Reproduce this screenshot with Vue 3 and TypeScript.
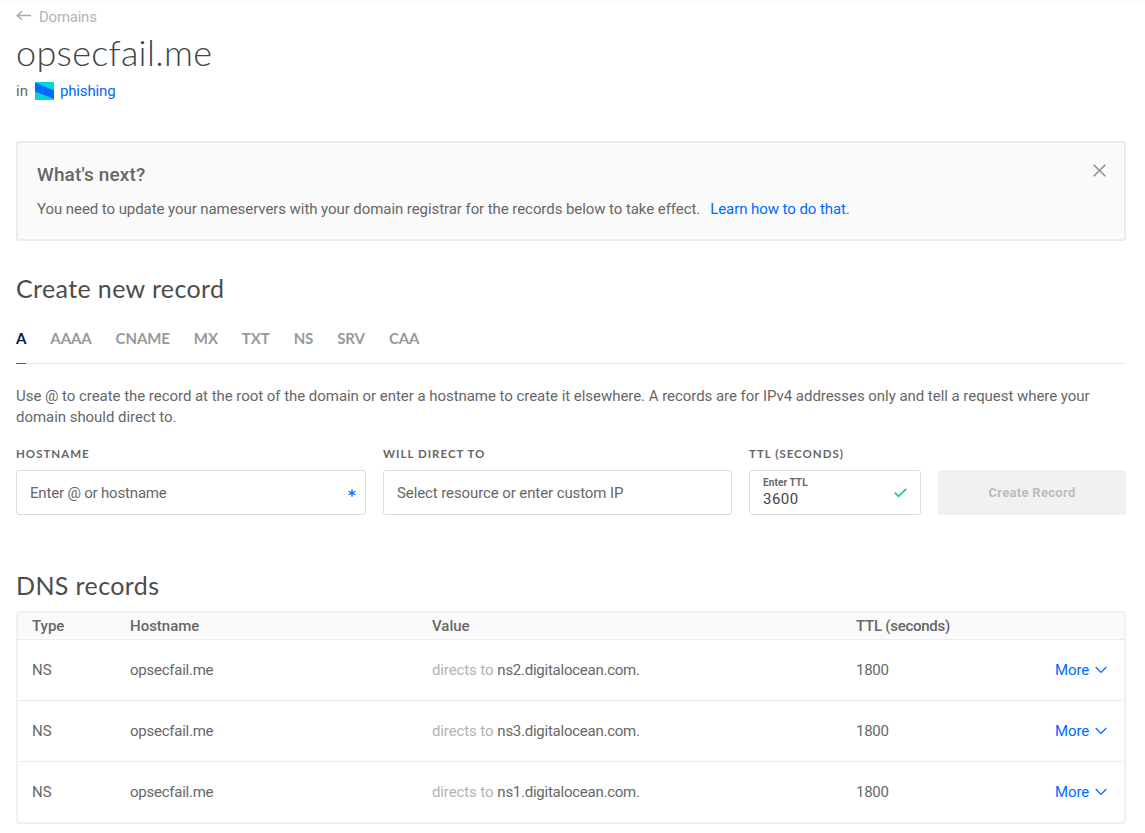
<script setup lang="ts">
interface DnsRecord {
  type: string
  hostname: string
  value: string
  ttl: number
}

const tabs: string[] = ['A', 'AAAA', 'CNAME', 'MX', 'TXT', 'NS', 'SRV', 'CAA']
const activeTab = 'A'

const records: DnsRecord[] = [
  { type: 'NS', hostname: 'opsecfail.me', value: 'ns2.digitalocean.com.', ttl: 1800 },
  { type: 'NS', hostname: 'opsecfail.me', value: 'ns3.digitalocean.com.', ttl: 1800 },
  { type: 'NS', hostname: 'opsecfail.me', value: 'ns1.digitalocean.com.', ttl: 1800 },
]
</script>

<template>
  <main class="page">
    <a class="back">
      <svg class="back-icon" width="16" height="12" viewBox="0 0 16 12">
        <path d="M6 1.2 L1.2 5.5 L6 9.8 M1.2 5.5 H15.2" />
      </svg>
      <span>Domains</span>
    </a>
    <h1 class="title">opsecfail.me</h1>
    <div class="project">
      <span>in</span>
      <svg class="project-icon" width="19" height="18" viewBox="0 0 19 18">
        <rect width="19" height="18" fill="#00d7d2" />
        <path d="M0 0.5 L19 8.5 V17 L0 9.5 Z" fill="#0069ff" />
      </svg>
      <a class="link">phishing</a>
    </div>

    <section class="notice">
      <div class="notice-body">
        <h3 class="notice-title">What's next?</h3>
        <p class="notice-text">
          <span>You need to update your nameservers with your domain registrar for the records below to take effect.</span>
          <a class="link notice-link">Learn how to do that.</a>
        </p>
      </div>
      <svg class="close" width="13" height="13" viewBox="0 0 13 13">
        <path d="M0.7 0.7 L12.3 12.3 M12.3 0.7 L0.7 12.3" />
      </svg>
    </section>

    <h2 class="heading create-heading">Create new record</h2>
    <nav class="tabs">
      <a v-for="tab in tabs" :key="tab" class="tab" :class="{ active: tab === activeTab }">{{ tab }}</a>
    </nav>

    <p class="description">
      <span class="line">Use @ to create the record at the root of the domain or enter a hostname to create it elsewhere. A records are for IPv4 addresses only and tell a request where your</span>
      <span class="line">domain should direct to.</span>
    </p>

    <form class="form">
      <div class="field">
        <label class="label">Hostname</label>
        <div class="input">
          <span class="placeholder p-host">Enter @ or hostname</span>
          <svg class="star" width="8" height="8" viewBox="0 0 8 8">
            <path d="M4 0.3 V7.7 M0.6 2.2 L7.4 5.8 M7.4 2.2 L0.6 5.8" />
          </svg>
        </div>
      </div>
      <div class="field">
        <label class="label">Will direct to</label>
        <div class="input">
          <span class="placeholder">Select resource or enter custom IP</span>
        </div>
      </div>
      <div class="field">
        <label class="label">TTL (seconds)</label>
        <div class="input">
          <div class="filled">
            <span class="mini">Enter TTL</span>
            <span class="entered">3600</span>
          </div>
          <svg class="check" width="13" height="10" viewBox="0 0 13 10">
            <path d="M0.8 4.6 L4.6 8.3 L12.2 0.9" />
          </svg>
        </div>
      </div>
      <button class="submit" type="button">Create Record</button>
    </form>

    <h2 class="heading dns-heading">DNS records</h2>
    <section class="table">
      <div class="row head">
        <span>Type</span>
        <span>Hostname</span>
        <span>Value</span>
        <span class="head-ttl">TTL (seconds)</span>
      </div>
      <div v-for="record in records" :key="record.value" class="row">
        <span>{{ record.type }}</span>
        <span class="hostname">{{ record.hostname }}</span>
        <span class="value"><span class="muted">directs to</span><span class="target">{{ record.value }}</span></span>
        <span class="ttl">{{ record.ttl }}</span>
        <a class="more">
          <span>More</span>
          <svg width="12" height="8" viewBox="0 0 12 8"><path d="M0.7 1 L6 6.4 L11.3 1" /></svg>
        </a>
      </div>
    </section>
  </main>
</template>

<style>
body {
  margin: 0;
  background: #fff;
}
</style>

<style scoped>
.page {
  box-sizing: border-box;
  width: 1145px;
  height: 833px;
  padding: 7px 19px 0 16px;
  overflow: hidden;
  background: linear-gradient(#f9f9f9, #fff 4px);
  color: #676767;
  font-family: Roboto, "Liberation Sans", sans-serif;
  font-size: 15px;
  line-height: 21px;
  white-space: nowrap;
}
h1, h2, h3, p {
  margin: 0;
}
.link {
  color: #0069ff;
  letter-spacing: -0.15px;
}
.back {
  display: flex;
  align-items: center;
  height: 20px;
  gap: 7px;
  color: #b3b3b3;
  letter-spacing: -0.25px;
}
.back-icon {
  margin-top: -2px;
  fill: none;
  stroke: #aaa;
  stroke-width: 1.5;
}
.title {
  height: 54px;
  line-height: 51px;
  font-family: Lato, Roboto, sans-serif;
  font-size: 36px;
  font-weight: 300;
  letter-spacing: 0.3px;
  color: #444;
}
.project {
  display: flex;
  align-items: center;
  height: 20px;
}
.project-icon {
  margin: 0 6px 0 7px;
}
.notice {
  box-sizing: border-box;
  display: flex;
  justify-content: space-between;
  height: 100px;
  margin-top: 40px;
  padding: 20px 18px 0 19px;
  border: 2px solid #ececec;
  border-radius: 3px;
  background: #fafafa;
}
.notice-title {
  height: 24px;
  line-height: 24px;
  font-size: 19px;
  font-weight: 500;
  letter-spacing: 0.15px;
}
.notice-text {
  display: flex;
  margin-top: 12px;
  letter-spacing: -0.07px;
}
.notice-link {
  margin-left: 10px;
  letter-spacing: -0.07px;
}
.close {
  margin-top: 1px;
  fill: none;
  stroke: #8a8a8a;
  stroke-width: 1.4;
}
.heading {
  height: 30px;
  line-height: 26px;
  font-family: Lato, Roboto, sans-serif;
  font-size: 25px;
  font-weight: 400;
  letter-spacing: 0.38px;
  color: #4c4c4c;
}
.create-heading {
  margin-top: 34px;
}
.tabs {
  display: flex;
  gap: 24px;
  box-sizing: border-box;
  height: 59px;
  border-bottom: 1px solid #ececec;
}
.tab {
  height: 58px;
  padding-top: 23px;
  box-sizing: border-box;
  font-family: Lato, Roboto, sans-serif;
  font-size: 15px;
  font-weight: 700;
  letter-spacing: -0.1px;
  color: #999;
}
.tab.active {
  height: 59px;
  color: #031b4e;
  border-bottom: 1px solid #0069ff;
}
.description {
  margin-top: 22px;
  letter-spacing: -0.042px;
}
.line {
  display: block;
}
.form {
  display: grid;
  grid-template-columns: 350px 349px 172px 188px;
  column-gap: 17px;
  align-items: end;
  margin-top: 18px;
}
.label {
  display: block;
  height: 16px;
  margin-bottom: 8px;
  line-height: 15px;
  font-family: Lato, Roboto, sans-serif;
  font-size: 11.5px;
  font-weight: 700;
  letter-spacing: 1px;
  text-transform: uppercase;
}
.input {
  box-sizing: border-box;
  display: flex;
  align-items: center;
  justify-content: space-between;
  height: 45px;
  padding: 0 13px;
  border: 1px solid #dcdcdc;
  border-radius: 3px;
}
.placeholder {
  padding-top: 2px;
  letter-spacing: -0.1px;
}
.p-host {
  letter-spacing: -0.18px;
}
.star {
  margin-right: -4px;
  fill: none;
  stroke: #0069ff;
  stroke-width: 1.3;
}
.filled {
  display: flex;
  flex-direction: column;
  padding-top: 1px;
}
.mini {
  line-height: 12px;
  font-size: 10px;
  font-weight: 700;
  letter-spacing: 0.1px;
}
.entered {
  line-height: 20px;
  color: #444;
  letter-spacing: 0.5px;
}
.check {
  fill: none;
  stroke: #15cd72;
  stroke-width: 1.7;
}
.submit {
  height: 45px;
  padding: 0;
  border: 0;
  border-radius: 3px;
  background: #f1f1f1;
  color: #bdbdbd;
  font-family: inherit;
  font-size: 13px;
  font-weight: 700;
  letter-spacing: 0.3px;
}
.dns-heading {
  margin-top: 57px;
}
.table {
  box-sizing: border-box;
  height: 213px;
  margin-top: 9px;
  border: 2px solid #f1f1f1;
  border-radius: 4px;
}
.row {
  display: grid;
  grid-template-columns: 98px 302px 424px 199px 1fr;
  align-items: center;
  height: 60px;
  padding-left: 14px;
  border-bottom: 1px solid #ececec;
}
.row:last-child {
  border-bottom: 0;
}
.head {
  height: 26px;
  background: #fafafa;
  font-weight: 500;
}
.head-ttl,
.ttl {
  letter-spacing: -0.25px;
}
.hostname,
.target {
  letter-spacing: -0.25px;
}
.value {
  display: flex;
  gap: 4px;
}
.muted {
  color: #b3b3b3;
  letter-spacing: -0.12px;
}
.more {
  display: flex;
  align-items: center;
  gap: 6px;
  color: #0069ff;
  letter-spacing: -0.1px;
}
.more svg {
  fill: none;
  stroke: #0069ff;
  stroke-width: 1.3;
}
</style>
